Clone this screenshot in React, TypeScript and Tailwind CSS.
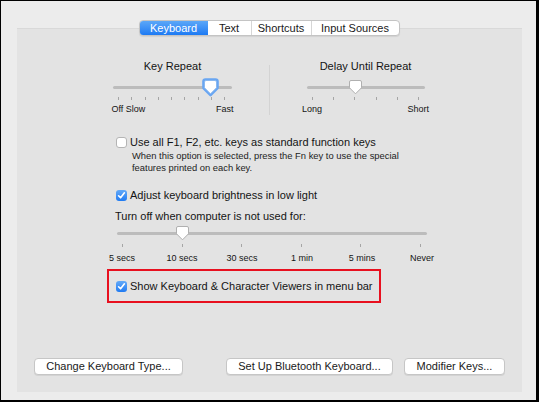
import React from "react";

const font = { fontFamily: '"Liberation Sans", Arial, sans-serif' };

function Thumb({ focused }: { focused?: boolean }) {
  return (
    <svg width="17" height="19" viewBox="0 0 17 19" className="block">
      {focused && (
        <path
          d="M3.5 1.5 H13.5 Q15.5 1.5 15.5 3.5 V10 L8.5 17 L1.5 10 V3.5 Q1.5 1.5 3.5 1.5 Z"
          fill="none"
          stroke="#69a6f2"
          strokeWidth="2.6"
          strokeLinejoin="round"
        />
      )}
      <path
        d="M4 2.5 H13 Q14.5 2.5 14.5 4 V9.8 L8.5 15.8 L2.5 9.8 V4 Q2.5 2.5 4 2.5 Z"
        fill="#ffffff"
        stroke={focused ? "#8bb9f0" : "#b0b0b0"}
        strokeWidth="1"
        strokeLinejoin="round"
      />
    </svg>
  );
}

function Ticks({ n, className }: { n: number; className: string }) {
  return (
    <div className={`flex justify-between h-[3px] ${className}`}>
      {Array.from({ length: n }).map((_, i) => (
        <span key={i} className="block w-px h-[3px] bg-[#a5a5a5]" />
      ))}
    </div>
  );
}

function Check({ checked }: { checked?: boolean }) {
  if (checked) {
    return (
      <span className="flex items-center justify-center w-[11px] h-[11px] rounded-[3px] bg-gradient-to-b from-[#62a9f8] to-[#1f7bf2] shrink-0">
        <svg width="9" height="9" viewBox="0 0 9 9">
          <path d="M1.6 4.8 L3.6 6.8 L7.4 1.8" fill="none" stroke="#fff" strokeWidth="1.6" strokeLinecap="round" strokeLinejoin="round" />
        </svg>
      </span>
    );
  }
  return <span className="block w-[11px] h-[11px] rounded-[3px] bg-white border border-[#b4b4b4] shrink-0" />;
}

function Btn({ label, w }: { label: string; w: string }) {
  return (
    <div
      className={`${w} h-[17px] flex items-center justify-center bg-white border border-[#c6c6c6] rounded-[4px] shadow-[0_1px_0_rgba(0,0,0,0.07)] text-[11px] text-[#1a1a1a] leading-none`}
    >
      {label}
    </div>
  );
}

export default function App() {
  const tabs = [
    { t: "Keyboard", w: "w-[68px]", sel: true },
    { t: "Text", w: "w-[43px]" },
    { t: "Shortcuts", w: "w-[60px]" },
    { t: "Input Sources", w: "w-[88px]" },
  ];
  const labels2 = ["5 secs", "10 secs", "30 secs", "1 min", "5 mins", "Never"];
  return (
    <div
      style={font}
      className="w-[539px] h-[402px] bg-[#ececec] border-t border-l border-r-[3px] border-b-[2px] border-black text-[#141414] overflow-hidden"
    >
      <div className="ml-[16px] mt-[27px] w-[505px] h-[364px] bg-[#e3e3e3] border-t border-[#d9d9d9] flex flex-col">
        {/* tabs */}
        <div className="self-center -mt-[9px] ml-[-1px] flex h-[16px] rounded-[4px] border border-[#c4c4c4] bg-white shadow-[0_1px_1px_rgba(0,0,0,0.08)] overflow-hidden text-[11px] leading-none">
          {tabs.map((tb, i) => (
            <div
              key={tb.t}
              className={`${tb.w} flex items-center justify-center ${
                tb.sel
                  ? "bg-gradient-to-b from-[#5ba7f8] to-[#1c7af3] text-white"
                  : `text-[#1a1a1a] ${i > 1 ? "border-l border-[#d6d6d6]" : ""}`
              }`}
            >
              {tb.t}
            </div>
          ))}
        </div>

        {/* sliders row */}
        <div className="flex ml-[90px] mt-[23px]">
          <div className="w-[131px] flex flex-col items-center">
            <div className="text-[11px] leading-[15px]">Key Repeat</div>
            <div className="relative w-[119px] h-[18px] mt-[5px]">
              <div className="mt-[7px] h-[3px] rounded-full bg-[#bcbcbc]" />
              <div className="absolute left-[89px] top-[-1px]">
                <Thumb focused />
              </div>
            </div>
            <Ticks n={9} className="w-[119px] pl-[5px] pr-[7px]" />
            <div className="w-[122px] flex justify-between text-[9px] leading-[11px] mt-[4px]">
              <span>Off Slow</span>
              <span>Fast</span>
            </div>
          </div>
          <div className="ml-[31px] mt-[6px] w-px h-[50px] bg-[#d3d3d3]" />
          <div className="ml-[30px] w-[131px] flex flex-col items-center">
            <div className="text-[11px] leading-[15px]">Delay Until Repeat</div>
            <div className="relative w-[118px] h-[18px] mt-[5px]">
              <div className="mt-[7px] h-[3px] rounded-full bg-[#bcbcbc]" />
              <div className="absolute left-[40px] top-[-1px]">
                <Thumb />
              </div>
            </div>
            <Ticks n={6} className="w-[118px] px-[5px]" />
            <div className="w-[127px] flex justify-between text-[9px] leading-[11px] mt-[4px]">
              <span>Long</span>
              <span>Short</span>
            </div>
          </div>
        </div>

        {/* options */}
        <div className="ml-[98px] mt-[20px] flex flex-col">
          <div className="flex items-center h-[15px] ml-[1px]">
            <Check />
            <span className="ml-[3px] text-[11px] leading-[15px]">
              Use all F1, F2, etc. keys as standard function keys
            </span>
          </div>
          <div className="ml-[17px] text-[9.4px] leading-[12px] text-[#222]">
            When this option is selected, press the Fn key to use the special
            <br />
            features printed on each key.
          </div>
          <div className="flex items-center h-[15px] ml-[1px] mt-[14px]">
            <Check checked />
            <span className="ml-[3px] text-[11px] leading-[15px]">
              Adjust keyboard brightness in low light
            </span>
          </div>
          <div className="mt-[6px] text-[11px] leading-[15px]">
            Turn off when computer is not used for:
          </div>
          <div className="relative ml-[2px] w-[310px] h-[18px] mt-[1px]">
            <div className="mt-[7px] h-[3px] rounded-full bg-[#bcbcbc]" />
            <div className="absolute left-[57px] top-[-1px]">
              <Thumb />
            </div>
          </div>
          <Ticks n={6} className="ml-[2px] w-[310px] pl-[5px] pr-[6px] mt-[1px]" />
          <div className="grid grid-cols-[60px_60px_60px_60px_60px_60px] ml-[-23px] mt-[6px] text-[9px] leading-[11px]">
            {labels2.map((l) => (
              <span key={l} className="text-center">
                {l}
              </span>
            ))}
          </div>
          <div className="mt-[5px] ml-[-8px] w-[274px] h-[34px] border-2 border-[#e8101f] flex items-center pl-[7px]">
            <Check checked />
            <span className="ml-[3px] text-[11px] leading-[15px]">
              Show Keyboard &amp; Character Viewers in menu bar
            </span>
          </div>
        </div>

        {/* buttons */}
        <div className="mt-auto mb-[17px] flex ml-[17px]">
          <Btn label="Change Keyboard Type..." w="w-[149px]" />
          <div className="ml-[43px]">
            <Btn label="Set Up Bluetooth Keyboard..." w="w-[167px]" />
          </div>
          <div className="ml-[11px]">
            <Btn label="Modifier Keys..." w="w-[101px]" />
          </div>
        </div>
      </div>
    </div>
  );
}
